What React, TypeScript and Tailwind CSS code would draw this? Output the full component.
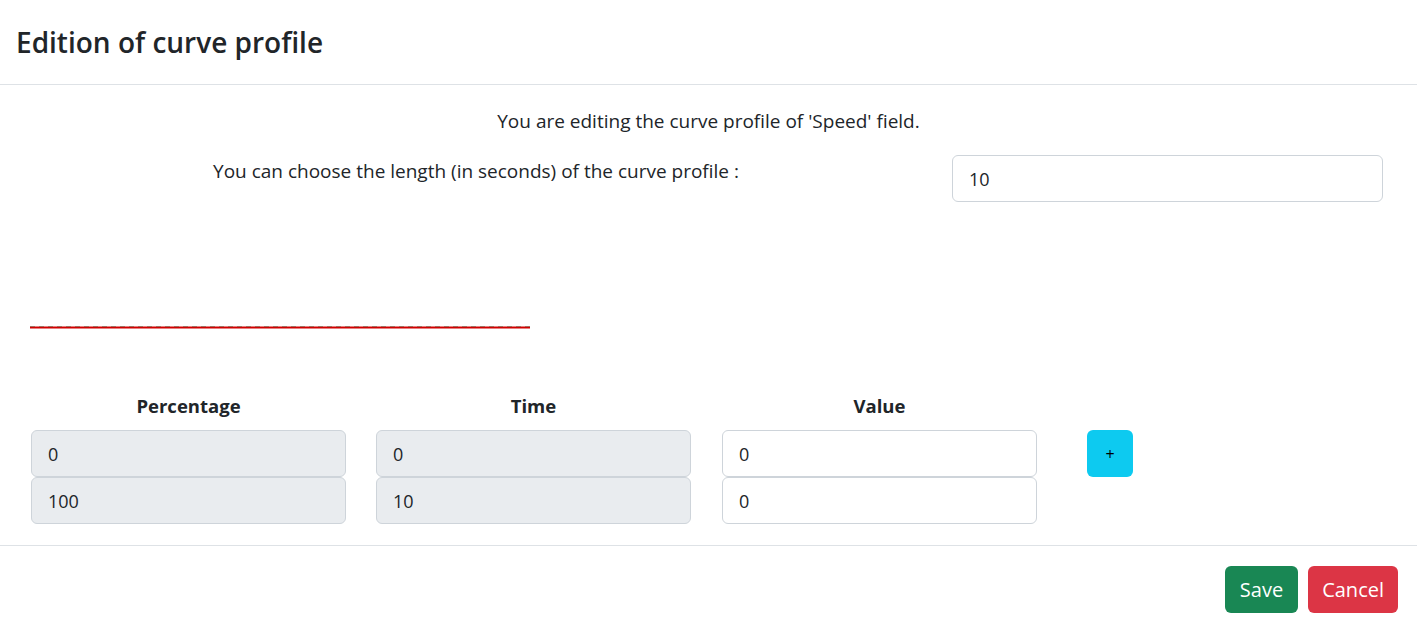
import React from 'react';

const font = { fontFamily: '"Open Sans", "Noto Sans", sans-serif' };

const rows = [
  { pct: '0', time: '0', value: '0' },
  { pct: '100', time: '10', value: '0' },
];

export default function App() {
  return (
    <div className="w-[1417px] h-[630px] bg-white text-[#212529]" style={font}>
      <div className="h-[85px] flex items-center px-4 border-b border-[#dee2e6]">
        <h3 className="text-[28px] font-semibold leading-tight">Edition of curve profile</h3>
      </div>

      <div className="h-[460px] flex flex-col">
        <p className="pt-[22px] text-center text-[19px] leading-[28px]">
          You are editing the curve profile of 'Speed' field.
        </p>
        <div className="mt-[20px] flex items-start">
          <div className="w-[952px] pt-[2px] text-center text-[19px] leading-[28px]">
            You can choose the length (in seconds) of the curve profile :
          </div>
          <input
            className="w-[431px] h-[47px] px-4 border border-[#ced4da] rounded-md text-lg outline-none"
            defaultValue="10"
            style={font}
          />
        </div>

        <div className="ml-[30px] mt-[124px] w-[500px] h-[3px]">
          <svg width="500" height="3" className="block">
            <line x1="0" y1="1.5" x2="500" y2="1.5" stroke="#d00000" strokeWidth="2" />
            <line x1="0" y1="0.5" x2="500" y2="0.5" stroke="#a07060" strokeWidth="1" strokeDasharray="5 4" />
          </svg>
        </div>

        <div className="mt-[64px] ml-[31px] flex flex-col">
          <div className="flex h-[26px] items-center">
            <div className="w-[315px] text-center font-bold text-[18.5px]">Percentage</div>
            <div className="w-[315px] ml-[30px] text-center font-bold text-[18.5px]">Time</div>
            <div className="w-[315px] ml-[31px] text-center font-bold text-[18.5px]">Value</div>
          </div>
          <div className="mt-[11px] flex flex-col">
            {rows.map((r, i) => (
              <div key={i} className="flex items-start">
                <input
                  disabled
                  className="w-[315px] h-[47px] px-4 border border-[#ced4da] rounded-md bg-[#e9ecef] text-lg text-[#212529]"
                  defaultValue={r.pct}
                  style={font}
                />
                <input
                  disabled
                  className="w-[315px] h-[47px] ml-[30px] px-4 border border-[#ced4da] rounded-md bg-[#e9ecef] text-lg text-[#212529]"
                  defaultValue={r.time}
                  style={font}
                />
                <input
                  className="w-[315px] h-[47px] ml-[31px] px-4 border border-[#ced4da] rounded-md text-lg outline-none"
                  defaultValue={r.value}
                  style={font}
                />
                {i === 0 && (
                  <button className="ml-[50px] w-[46px] h-[47px] rounded-md bg-[#0dcaf0] text-black text-[16px]">
                    +
                  </button>
                )}
              </div>
            ))}
          </div>
        </div>
      </div>

      <div className="h-[85px] border-t border-[#dee2e6] flex items-center justify-end gap-[10px] pr-[19px] pt-[3px]">
        <button className="h-[47px] px-[15px] rounded-md bg-[#198754] text-white text-xl">Save</button>
        <button className="h-[47px] px-[14px] rounded-md bg-[#dc3545] text-white text-xl">Cancel</button>
      </div>
    </div>
  );
}
